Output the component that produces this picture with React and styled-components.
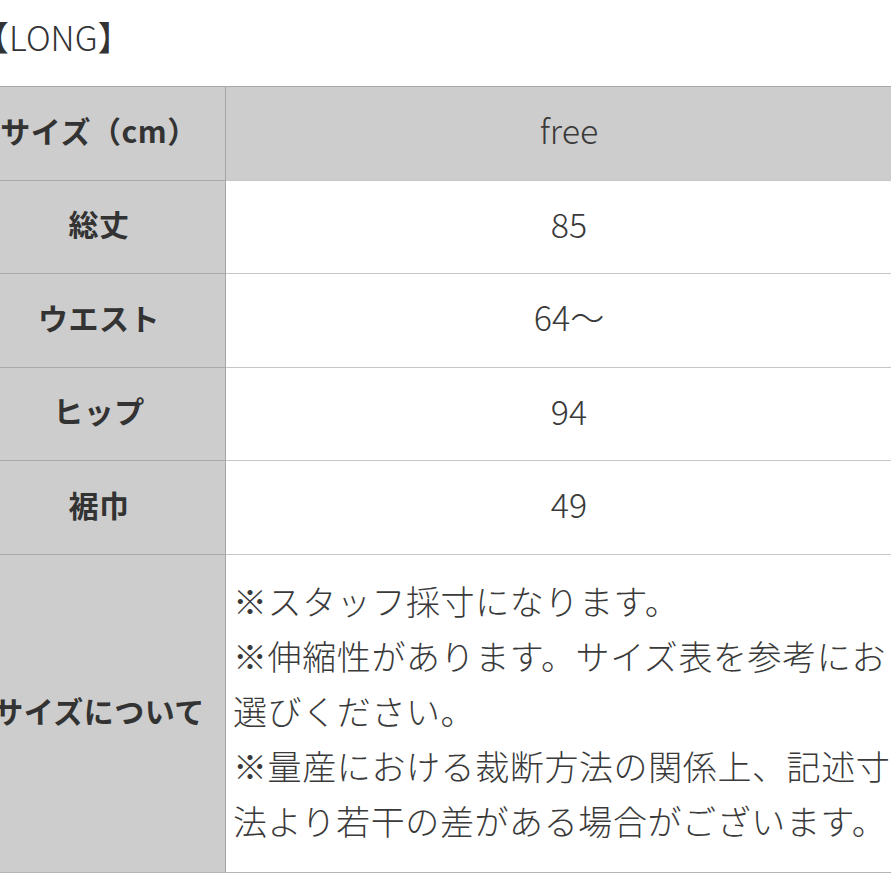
import styled, { createGlobalStyle } from "styled-components";

const GlobalStyle = createGlobalStyle`
  html, body {
    margin: 0;
    padding: 0;
    background: #fff;
    overflow: hidden;
  }
  body {
    font-family: "Noto Sans CJK JP", "Noto Sans", sans-serif;
    color: #333;
  }
`;

const Page = styled.div`
  width: 939px;
  margin-left: -27px;
  padding-top: 14px;
`;

const Heading = styled.div`
  font-size: 34px;
  font-weight: 300;
  line-height: 45px;
  height: 72px;
  margin-left: 2px;
  color: #333;
`;

const Table = styled.div`
  display: grid;
  grid-template-columns: 253px 1fr;
  border-bottom: 1px solid #b4b4b4;
`;

const Label = styled.div`
  height: ${(p) => p.h}px;
  box-sizing: border-box;
  padding-bottom: 7px;
  background: #cdcdcd;
  border-top: 1px solid #a9a9a9;
  border-right: 1px solid #a4a4a4;
  display: flex;
  align-items: center;
  justify-content: center;
  font-size: 30px;
  font-weight: 700;
  letter-spacing: 0.5px;
  color: #333;
`;

const Value = styled.div`
  height: ${(p) => p.h}px;
  box-sizing: border-box;
  padding-bottom: 7px;
  background: ${(p) => (p.head ? "#cdcdcd" : "#fff")};
  border-top: 1px solid ${(p) => (p.head ? "#a9a9a9" : "#c6c6c6")};
  display: flex;
  align-items: center;
  justify-content: center;
  font-size: 34px;
  font-weight: 300;
  color: #3a3a3a;
`;

const Note = styled.div`
  height: ${(p) => p.h}px;
  box-sizing: border-box;
  border-top: 1px solid #c6c6c6;
  display: flex;
  flex-direction: column;
  justify-content: center;
  padding: 0 0 6px 7px;
  font-size: 34px;
  font-weight: 300;
  line-height: 55px;
  letter-spacing: 0.6px;
  color: #3a3a3a;
`;

const Line = styled.div`
  white-space: nowrap;
`;

const rows = [
  { label: "サイズ（cm）", value: "free", head: true, h: 93.5 },
  { label: "総丈", value: "85", h: 93.5 },
  { label: "ウエスト", value: "64〜", h: 93.5 },
  { label: "ヒップ", value: "94", h: 93.5 },
  { label: "裾巾", value: "49", h: 93.5 },
];

const notes = [
  "※スタッフ採寸になります。",
  "※伸縮性があります。サイズ表を参考にお",
  "選びください。",
  "※量産における裁断方法の関係上、記述寸",
  "法より若干の差がある場合がございます。",
];

export default function App() {
  return (
    <>
      <GlobalStyle />
      <Page>
        <Heading>【LONG】</Heading>
        <Table>
          {rows.map((r) => [
            <Label key={r.label} h={r.h}>
              {r.label}
            </Label>,
            <Value key={r.label + "-v"} h={r.h} head={r.head}>
              {r.value}
            </Value>,
          ])}
          <Label h={318.5}>サイズについて</Label>
          <Note h={318.5}>
            {notes.map((n) => (
              <Line key={n}>{n}</Line>
            ))}
          </Note>
        </Table>
      </Page>
    </>
  );
}
